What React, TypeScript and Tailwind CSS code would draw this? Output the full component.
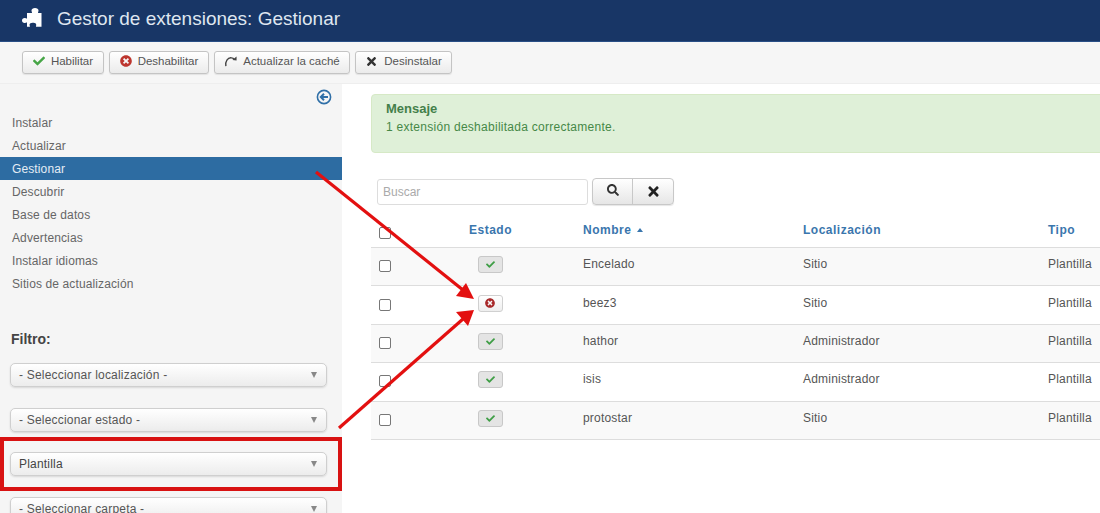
import React from "react";
import { FaCheck, FaTimesCircle, FaTimes, FaSearch } from "react-icons/fa";

const nav = ["Instalar", "Actualizar", "Gestionar", "Descubrir", "Base de datos", "Advertencias", "Instalar idiomas", "Sitios de actualización"];
const rows = [
  ["Encelado", "Sitio", true],
  ["beez3", "Sitio", false],
  ["hathor", "Administrador", true],
  ["isis", "Administrador", true],
  ["protostar", "Sitio", true],
] as const;
const cols = "grid grid-cols-[48px_142px_220px_245px_1fr] items-center";

function ToolBtn({ w, icon, label }: { w: string; icon: React.ReactNode; label: string }) {
  return (
    <div className={`${w} h-[23px] flex items-center justify-center gap-[6px] rounded-[3px] border border-[#c4c4c4] bg-gradient-to-b from-white to-[#ebebeb] text-[11.5px] text-[#555] shadow-[0_1px_1px_rgba(0,0,0,0.08)]`}>
      <span className="mb-[3px] flex">{icon}</span>
      <span className="pb-[1px]">{label}</span>
    </div>
  );
}

function Select({ label, dark }: { label: string; dark?: boolean }) {
  return (
    <div className={`h-[24px] w-[317px] shrink-0 flex items-center justify-between pl-[8px] pr-[9px] rounded-[5px] border border-[#cfcfcf] bg-gradient-to-b from-white to-[#ececec] text-[12px] tracking-[0.2px] shadow-[0_1px_2px_rgba(0,0,0,0.12)] ${dark ? "text-[#444]" : "text-[#555]"}`}>
      <span>{label}</span>
      <span className="w-0 h-0 border-l-[3.5px] border-r-[3.5px] border-t-[6px] border-l-transparent border-r-transparent border-t-[#888]" />
    </div>
  );
}

function Box() {
  return <span className="block w-[12px] h-[12px] rounded-[2px] border border-[#777] bg-white" />;
}

export default function App() {
  return (
    <div className="relative h-[513px] w-[1100px] overflow-hidden bg-white font-['Liberation_Sans',Arial,sans-serif]">
      <header className="h-[42px] bg-[#183666] flex items-center pl-[22px] border-b border-[#2a4f86] text-white">
        <svg viewBox="22 8 20 20" className="w-[20px] h-[20px] mb-[6px]" fill="#ffffff">
          <path d="M27 13 H32 C32 12 31.5 11.5 31.5 10.5 C31.5 9 33 8 35 8 C37 8 38.5 9 38.5 10.5 C38.5 11.5 38 12 38 13 H41.5 V26.8 H36 C36 25.5 36.5 25 36 24 C35.5 23 34 22.8 32.5 22.8 C31 22.8 29.5 23.5 29.5 24.8 C29.5 25.5 30 26 30 26.8 H27 V22.5 C26 22.5 25.5 23 24.5 23 C23 23 22 22 22 20.5 C22 19 23 18 24.5 18 C25.5 18 26 18.5 27 18.5 Z" />
        </svg>
        <h1 className="ml-[15px] pb-[4px] text-[19px] leading-none font-normal text-[#dfe6f0]">Gestor de extensiones: Gestionar</h1>
      </header>
      <div className="h-[42px] bg-[#f6f6f6] border-b border-[#eeeeee] flex items-center gap-[5px] pl-[22px]">
        <ToolBtn w="w-[82px]" icon={<FaCheck className="w-[12px] h-[12px] text-[#46a546]" />} label="Habilitar" />
        <ToolBtn w="w-[100px]" icon={<FaTimesCircle className="w-[12px] h-[12px] text-[#bd362f]" />} label="Deshabilitar" />
        <ToolBtn
          w="w-[136px]"
          icon={
            <svg viewBox="0 0 14 14" className="w-[13px] h-[13px]" fill="none">
              <path d="M2 12 C1 7 4 2.5 8 3 C9 3 10 3.6 11 4.6" stroke="#444" strokeWidth="1.5" />
              <path d="M9 5.5 L13.5 6 L13.5 1.5 Z" fill="#444" />
            </svg>
          }
          label="Actualizar la caché"
        />
        <ToolBtn w="w-[97px]" icon={<FaTimes className="w-[13px] h-[13px] text-[#333]" />} label="Desinstalar" />
      </div>

      <div className="flex h-[429px]">
        <aside className="w-[342px] shrink-0 bg-[#f5f5f5] overflow-hidden">
          <div className="h-[27px] pt-[5px] flex items-start justify-end pr-[10px]">
            <svg viewBox="0 0 16 16" className="w-[16px] h-[16px]" fill="none" stroke="#2f6fa7" strokeWidth="1.6">
              <circle cx="8" cy="8" r="6.6" />
              <path d="M12 8 H5 M8 4.8 L4.8 8 L8 11.2" strokeWidth="2" />
            </svg>
          </div>
          <nav>
            {nav.map((n) => (
              <div key={n} className={`h-[23px] flex items-center pl-[12px] text-[12px] tracking-[0.12px] ${n === "Gestionar" ? "bg-[#2d6ca2] text-[#e4edf5]" : "text-[#666]"}`}>
                {n}
              </div>
            ))}
          </nav>
          <div className="mt-[36px] pl-[11px] text-[14px] leading-[16px] font-bold text-[#444]">Filtro:</div>
          <div className="mt-[16px] pl-[10px] flex flex-col gap-[20.6px]">
            <Select label="- Seleccionar localización -" />
            <Select label="- Seleccionar estado -" />
            <Select label="Plantilla" dark />
            <Select label="- Seleccionar carpeta -" />
          </div>
        </aside>

        <main className="flex-1 min-w-0 pl-[29px] overflow-hidden">
          <div className="mt-[10px] h-[59px] -mr-[10px] rounded-[4px] bg-[#dff0d8] pl-[14px] pt-[6px] text-[#468847] border border-[#d6e9c6]">
            <div className="text-[13px] font-bold leading-[16px] text-[#44804a]">Mensaje</div>
            <div className="text-[12px] tracking-[0.27px] leading-[16px] mt-[2px]">1 extensión deshabilitada correctamente.</div>
          </div>

          <div className="mt-[25px] ml-[6px] flex items-center">
            <div className="w-[211px] h-[26px] rounded-[3px] border border-[#ddd] bg-white flex items-center pl-[5px] text-[12px] text-[#aaa]">Buscar</div>
            <div className="ml-[4px] flex h-[27px] rounded-[4px] border border-[#c8c8c8] bg-gradient-to-b from-white to-[#e6e6e6] shadow-[0_1px_1px_rgba(0,0,0,0.1)]">
              <div className="w-[40px] flex items-center justify-center border-r border-[#c8c8c8] pb-[3px]">
                <FaSearch className="w-[12px] h-[12px] text-[#333]" />
              </div>
              <div className="w-[40px] flex items-center justify-center pb-[1px]">
                <FaTimes className="w-[15px] h-[15px] text-[#222]" />
              </div>
            </div>
          </div>

          <div className={`${cols} mt-[10px] h-[33px] border-b border-[#ddd] pb-[2px] text-[12px] font-bold tracking-[0.5px] text-[#3a76ad]`}>
            <div className="pl-[8px] pt-[5px]"><Box /></div>
            <div className="text-center pl-[1px]">Estado</div>
            <div className="pl-[22px] flex items-center gap-[6px]">
              Nombre
              <span className="w-0 h-0 border-l-[3.5px] border-r-[3.5px] border-b-[4px] border-l-transparent border-r-transparent border-b-[#3a76ad]" />
            </div>
            <div className="pl-[22px]">Localización</div>
            <div className="pl-[22px]">Tipo</div>
          </div>

          {rows.map(([name, loc, on], i) => (
            <div key={name} className={`${cols} h-[38.4px] border-b border-[#ddd] text-[12px] tracking-[0.2px] text-[#555] ${i % 2 === 0 ? "bg-[#f9f9f9]" : "bg-white"}`}>
              <div className="pl-[8px] pb-[1px]"><Box /></div>
              <div className="flex justify-center pb-[4px]">
                <div className={`w-[25px] h-[17px] rounded-[3px] border flex items-center justify-center ${on ? "border-[#c8c8c8] bg-[#e4e4e4]" : "border-[#d0d0d0] bg-gradient-to-b from-white to-[#eee]"}`}>
                  {on ? <FaCheck className="w-[9px] h-[9px] text-[#3f9e46]" /> : <FaTimesCircle className="w-[10px] h-[10px] text-[#a8292a]" />}
                </div>
              </div>
              <div className="pl-[22px] pb-[5px]">{name}</div>
              <div className="pl-[22px] pb-[5px]">{loc}</div>
              <div className="pl-[22px] pb-[5px]">Plantilla</div>
            </div>
          ))}
        </main>
      </div>

      <div className="absolute left-0 top-[437px] w-[342px] h-[54px] border-[4px] border-[#d81212] pointer-events-none" />
      <svg className="absolute inset-0 w-[1100px] h-[513px] pointer-events-none" viewBox="0 0 1100 513" fill="none">
        <path d="M316 172 L463 290" stroke="#e31010" strokeWidth="3.2" />
        <path d="M474 299 L456 296 L466 283 Z" fill="#e31010" />
        <path d="M339 428 L463 319" stroke="#e31010" strokeWidth="3.2" />
        <path d="M474 310 L468 326 L456 312 Z" fill="#e31010" />
      </svg>
    </div>
  );
}
